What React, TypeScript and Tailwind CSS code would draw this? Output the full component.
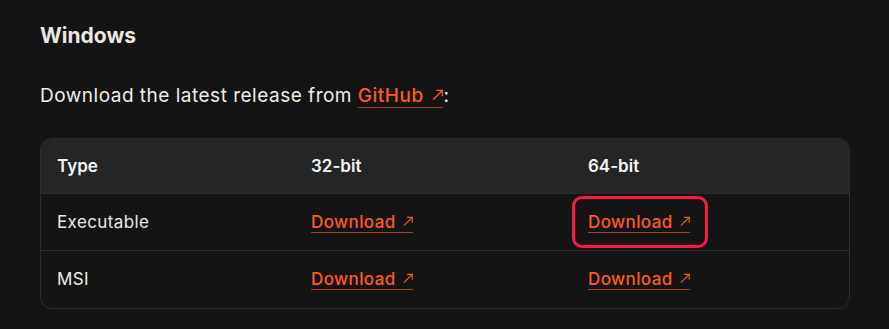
import React from "react";

const Arrow = () => (
  <svg viewBox="0 0 12 12" className="inline-block w-[0.62em] h-[0.62em] ml-[0.42em] align-[1px]" fill="none" stroke="currentColor" strokeWidth="1.3" strokeLinecap="round" strokeLinejoin="round">
    <path d="M1.5 10.5 L10.5 1.5" />
    <path d="M5 1.5 H10.5 V7" />
  </svg>
);

const Link = ({ children }: { children: React.ReactNode }) => (
  <a className="text-[#ff5a22] font-medium pb-[1px] bg-[linear-gradient(#a8401f,#a8401f)] bg-no-repeat bg-bottom bg-[length:100%_1px] cursor-pointer">
    {children}
    <Arrow />
  </a>
);

export default function App() {
  return (
    <div className="min-h-[329px] w-full bg-[#141414] pl-10 pr-[39px] pt-[21px] text-[#eeeae6]" style={{ fontFamily: "Inter, 'Noto Sans', sans-serif" }}>
      <h2 className="text-[21px] leading-[30px] font-bold text-[#ede6e1]">Windows</h2>
      <p className="mt-[31px] text-[19px] leading-[28px] tracking-[0.5px] text-[#f0ede9]">
        Download the latest release from <Link>GitHub</Link>:
      </p>
      <div className="mt-[28px] rounded-xl border border-[#2e2e2e] overflow-hidden text-[17px] leading-[24px] tracking-[0.4px]">
        <div className="grid grid-cols-[254px_277px_1fr] bg-[#252525] border-b border-[#2e2e2e] font-semibold tracking-normal text-[#f5f5f5]">
          <div className="px-4 py-[15px]">Type</div>
          <div className="px-4 py-[15px]">32-bit</div>
          <div className="px-4 py-[15px]">64-bit</div>
        </div>
        <div className="grid grid-cols-[254px_277px_1fr] border-b border-[#2e2e2e] text-[#ebebeb]">
          <div className="px-4 py-4">Executable</div>
          <div className="px-4 py-4"><Link>Download</Link></div>
          <div className="px-4 py-4">
            <span className="relative inline-block">
              <Link>Download</Link>
              <span className="absolute -left-[16px] -right-[18px] -top-[14px] -bottom-[14px] rounded-[10px] border-[3px] border-[#ff1744] pointer-events-none" />
            </span>
          </div>
        </div>
        <div className="grid grid-cols-[254px_277px_1fr] text-[#ebebeb]">
          <div className="px-4 pt-4 pb-[17px]">MSI</div>
          <div className="px-4 pt-4 pb-[17px]"><Link>Download</Link></div>
          <div className="px-4 pt-4 pb-[17px]"><Link>Download</Link></div>
        </div>
      </div>
    </div>
  );
}
